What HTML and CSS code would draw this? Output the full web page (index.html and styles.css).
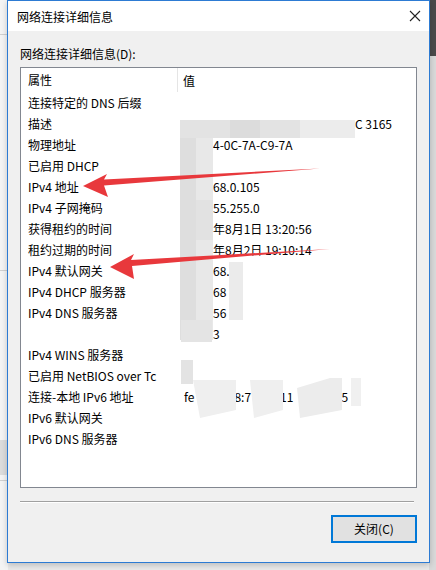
FILE: index.html
```html
<!DOCTYPE html>
<html lang="zh-CN">
<head>
<meta charset="utf-8">
<title>网络连接详细信息</title>
<link rel="stylesheet" href="styles.css">
</head>
<body>
<div class="desk">
  <div class="back-left">
    <div class="bl-line l1"></div>
    <div class="bl-line l2"></div>
    <div class="bl-line l3"></div>
    <div class="bl-band"></div>
  </div>
  <div class="back-right"><div class="br-top"></div></div>

  <div class="dialog">
    <div class="titlebar">
      <span class="title">网络连接详细信息</span>
      <svg class="close" width="12" height="12" viewBox="0 0 12 12"><path d="M1 1 L11 11 M11 1 L1 11" stroke="#222" stroke-width="1.1" fill="none"/></svg>
    </div>
    <div class="content">
      <div class="label">网络连接详细信息(D):</div>
      <div class="list">
        <div class="head"><div class="c1">属性</div><div class="c2 hv">值</div></div>
        <div class="row"><div class="c1">连接特定的 DNS 后缀</div><div class="c2"></div></div>
        <div class="row"><div class="c1">描述</div><div class="c2 desc">C 3165</div></div>
        <div class="row"><div class="c1">物理地址</div><div class="c2">4-0C-7A-C9-7A</div></div>
        <div class="row"><div class="c1">已启用 DHCP</div><div class="c2"></div></div>
        <div class="row"><div class="c1">IPv4 地址</div><div class="c2">68.0.105</div></div>
        <div class="row"><div class="c1">IPv4 子网掩码</div><div class="c2">55.255.0</div></div>
        <div class="row"><div class="c1">获得租约的时间</div><div class="c2">年8月1日 13:20:56</div></div>
        <div class="row"><div class="c1">租约过期的时间</div><div class="c2">年8月2日 19:10:14</div></div>
        <div class="row"><div class="c1">IPv4 默认网关</div><div class="c2">68.0</div></div>
        <div class="row"><div class="c1">IPv4 DHCP 服务器</div><div class="c2">68</div></div>
        <div class="row"><div class="c1">IPv4 DNS 服务器</div><div class="c2">56</div></div>
        <div class="row"><div class="c1"></div><div class="c2">3</div></div>
        <div class="row"><div class="c1">IPv4 WINS 服务器</div><div class="c2"></div></div>
        <div class="row"><div class="c1">已启用 NetBIOS over Tc</div><div class="c2 nb">x</div></div>
        <div class="row"><div class="c1">连接-本地 IPv6 地址</div><div class="c2 v6"><span class="s1">fe</span><span class="s2">8:7</span><span class="s3">11</span><span class="s4">5</span></div></div>
        <div class="row"><div class="c1">IPv6 默认网关</div><div class="c2"></div></div>
        <div class="row"><div class="c1">IPv6 DNS 服务器</div><div class="c2"></div></div>
      </div>
      <div class="sep"></div>
      <div class="btns"><button class="btn">关闭(C)</button></div>
    </div>
  </div>

  <svg class="overlay" width="436" height="570" viewBox="0 0 436 570">
    <g class="mosaic">
      <rect x="180" y="120" width="120" height="18" fill="#e3e3e3"/>
      <rect x="300" y="120" width="55" height="18" fill="#ececec"/>
      <rect x="230" y="120" width="30" height="18" fill="#dcdcdc"/>
      <rect x="180" y="138" width="33" height="202" fill="#e8e8e8"/>
      <rect x="180" y="138" width="16" height="202" fill="#dedede"/>
      <rect x="196" y="200" width="17" height="40" fill="#e2e2e2"/>
      <rect x="229" y="262" width="14" height="58" fill="#ebebeb"/>
      <rect x="181" y="320" width="31" height="22" fill="#e4e4e4"/>
      <rect x="181" y="360" width="12" height="24" fill="#e3e3e3"/>
      <polygon points="193,380 236,380 236,410 200,418" fill="#efefef"/>
      <polygon points="250,380 283,380 283,410 254,418" fill="#efefef"/>
      <polygon points="297,388 330,378 342,378 342,410 300,418" fill="#ececec"/>
      <rect x="351" y="378" width="10" height="28" fill="#f0f0f0"/>
    </g>
    <polygon class="arrow" points="83,186 107,174 104,179.5 320,168.5 104,185.5 108,197"/>
    <polygon class="arrow" points="110,267 134,254 131,260 330,249 132,266 134,279"/>
  </svg>
</div>
</body>
</html>
```

FILE: styles.css
```css
html, body {
  margin: 0;
  padding: 0;
}

body {
  font-family: "Noto Sans CJK SC", "Noto Sans", sans-serif;
  font-size: 12px;
  color: #000;
}

.desk {
  position: relative;
  width: 436px;
  height: 570px;
  background: #e9e9e9;
  overflow: hidden;
}

.back-left {
  position: absolute;
  left: 0;
  top: 0;
  width: 8px;
  height: 570px;
  background: #f4f4f4;
}

.bl-line {
  position: absolute;
  left: 0;
  width: 8px;
  height: 1px;
  background: #d0d0d0;
}
.l1 { top: 34px; }
.l2 { top: 270px; }
.l3 { top: 480px; }

.bl-band {
  position: absolute;
  left: 0;
  top: 440px;
  width: 8px;
  height: 35px;
  background: #dcdcdc;
}

.back-right {
  position: absolute;
  right: 0;
  top: 0;
  width: 7px;
  height: 570px;
  background: #d9d9d9;
}

.br-top {
  height: 56px;
  background: #4a4a4a;
}

.dialog {
  position: absolute;
  left: 7px;
  top: 0;
  width: 423px;
  height: 563px;
  box-sizing: border-box;
  border: 1px solid #2d7bd3;
  background: #f0f0f0;
  display: flex;
  flex-direction: column;
  box-shadow: 0 2px 6px rgba(0, 0, 0, 0.2);
}

.titlebar {
  height: 30px;
  background: #fff;
  display: flex;
  align-items: center;
  justify-content: space-between;
  padding: 0 8px 0 9px;
  flex: none;
}

.title {
  line-height: 16px;
  padding-top: 1px;
}

.close {
  display: block;
}

.content {
  padding: 15px 12px 0 12px;
  display: flex;
  flex-direction: column;
}

.label {
  line-height: 16px;
  height: 16px;
}

.list {
  margin-top: 5px;
  height: 421px;
  box-sizing: border-box;
  border: 1px solid #828790;
  background: #fff;
  display: flex;
  flex-direction: column;
}

.head {
  height: 24px;
  display: flex;
  align-items: center;
  flex: none;
}

.head .c1 {
  border-right: 1px solid #e5e5e5;
  height: 24px;
  line-height: 24px;
}

.row {
  height: 21px;
  display: flex;
  align-items: center;
  flex: none;
}

.c1 {
  width: 157px;
  box-sizing: border-box;
  padding-left: 7px;
  white-space: nowrap;
  overflow: hidden;
  line-height: 21px;
}

.c2 {
  flex: 1;
  padding-left: 35px;
  white-space: nowrap;
  line-height: 21px;
}

.c2.hv {
  padding-left: 5px;
}

.c2.desc {
  padding-left: 177px;
}

.c2.nb {
  padding-left: 5px;
}

.c2.v6 {
  padding-left: 6px;
}

.s2 { margin-left: 40px; }
.s3 { margin-left: 29px; }
.s4 { margin-left: 48px; }

.sep {
  margin-top: 13px;
  width: 394px;
  height: 1px;
  background: #a0a0a0;
  border-bottom: 1px solid #fff;
}

.btns {
  margin-top: 12px;
  display: flex;
  justify-content: flex-end;
}

.btn {
  width: 86px;
  height: 28px;
  box-sizing: border-box;
  border: 2px solid #0078d7;
  background: #e1e1e1;
  font-family: "Noto Sans CJK SC", "Noto Sans", sans-serif;
  font-size: 12px;
  color: #000;
  padding: 0;
  line-height: 22px;
}

.overlay {
  position: absolute;
  left: 0;
  top: 0;
  pointer-events: none;
}

.arrow {
  fill: #e8383c;
}
```
